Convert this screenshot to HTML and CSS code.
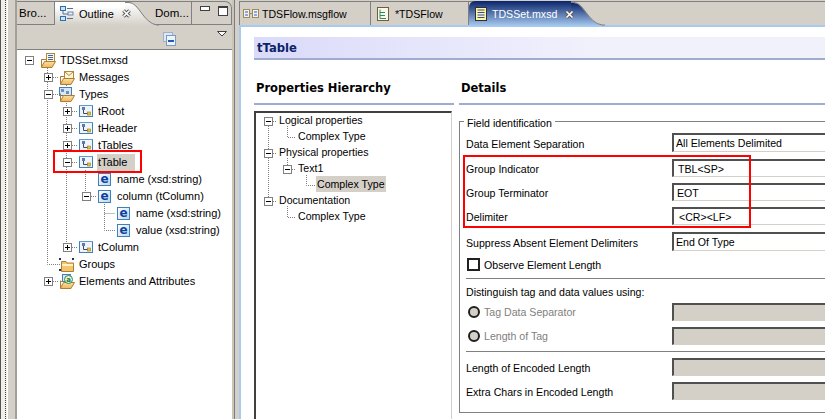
FILE: index.html
```html
<!DOCTYPE html>
<html lang="en">
<head>
<meta charset="utf-8">
<title>TDSSet.mxsd</title>
<link rel="stylesheet" href="styles.css">
</head>
<body>
<svg class="defs" width="0" height="0" aria-hidden="true">
  <defs>
    <linearGradient id="gFolder" x1="0" y1="0" x2="0" y2="1"><stop offset="0" stop-color="#fdeeb8"/><stop offset="1" stop-color="#eeb75e"/></linearGradient>
    <linearGradient id="gBox" x1="0" y1="0" x2="1" y2="1"><stop offset="0" stop-color="#ffffff"/><stop offset="1" stop-color="#bcd6ec"/></linearGradient>
    <g id="folderOpen">
      <path d="M1.5 6.5V14.5H12L15.5 8.5H4.5L1.5 14" fill="url(#gFolder)" stroke="#b07c34"/>
    </g>
    <symbol id="iRoot" viewBox="0 0 16 16">
      <path d="M1.5 14V6.5H6" fill="none" stroke="#b07c34"/>
      <rect x="6.5" y="0.5" width="8" height="9" fill="#fff8d8" stroke="#b08a3c"/>
      <path d="M8 2.5h5M8 4.5h5M8 6.5h5" stroke="#3a66b8"/>
      <use href="#folderOpen"/>
    </symbol>
    <symbol id="iMessages" viewBox="0 0 16 16">
      <path d="M1.5 14V6.5H5" fill="none" stroke="#b07c34"/>
      <rect x="5.5" y="1.5" width="9" height="7" fill="#fff6d8" stroke="#b08a3c"/>
      <path d="M5.5 1.5L10 5.5L14.5 1.5" fill="none" stroke="#b08a3c"/>
      <use href="#folderOpen"/>
    </symbol>
    <symbol id="iTypes" viewBox="0 0 16 16">
      <rect x="0.5" y="0.5" width="12" height="8" fill="#d7e7f6" stroke="#3f80b8"/>
      <rect x="2" y="2" width="3" height="3" fill="#6f8fc0"/>
      <rect x="7" y="4" width="3" height="3" fill="#6f8fc0"/>
      <use href="#folderOpen"/>
    </symbol>
    <symbol id="iType" viewBox="0 0 16 16">
      <rect x="1.5" y="1.5" width="13" height="11" fill="#eef4fb" stroke="#3f80b8"/>
      <rect x="1" y="1" width="14" height="1" fill="#5f9ccc"/>
      <path d="M5.5 5V9.5H10" fill="none" stroke="#404a70"/>
      <rect x="4" y="3" width="3" height="3" fill="#6478a8"/>
      <rect x="9.5" y="8" width="3" height="3" fill="#e8c040" stroke="#9a7a20" stroke-width="0.6"/>
    </symbol>
    <symbol id="iElem" viewBox="0 0 16 16">
      <rect x="1.5" y="1.5" width="12" height="12" fill="url(#gBox)" stroke="#3f80b8"/>
      <text x="7.5" y="11" class="icon-e" text-anchor="middle">e</text>
    </symbol>
    <symbol id="iGroups" viewBox="0 0 16 16">
      <path d="M2.5 14.5V4.5H7L8 6H14.5V14.5Z" fill="#f2c66e" stroke="#b07c34"/>
      <path d="M3 8H14" stroke="#fff0c0" stroke-width="2"/>
      <path d="M0 1h2v2H0zM13 1h2v2h-2zM0 12h2v2H0z" fill="#1c2f6a"/>
    </symbol>
    <symbol id="iElems" viewBox="0 0 16 16">
      <rect x="3.5" y="0.5" width="8" height="7" fill="#d7e7f6" stroke="#3f80b8"/>
      <path d="M1.5 14V7.5H4" fill="none" stroke="#b07c34"/>
      <use href="#folderOpen"/>
      <circle cx="9.5" cy="5.5" r="4" fill="#e6f4e6" stroke="#2f8a4a"/>
      <text x="9.5" y="8" class="icon-a" text-anchor="middle">a</text>
    </symbol>
    <symbol id="iPlus" viewBox="0 0 9 9">
      <rect x="0.5" y="0.5" width="8" height="8" fill="#fff" stroke="#808080"/>
      <path d="M2 4.5h5M4.5 2v5" stroke="#000"/>
    </symbol>
    <symbol id="iMinus" viewBox="0 0 9 9">
      <rect x="0.5" y="0.5" width="8" height="8" fill="#fff" stroke="#808080"/>
      <path d="M2 4.5h5" stroke="#000"/>
    </symbol>
    <symbol id="iClose" viewBox="0 0 11 11">
      <path d="M2.5 2.5L8.5 8.5M8.5 2.5L2.5 8.5" stroke="#5a5a5a" stroke-width="3.6"/>
      <path d="M2.5 2.5L8.5 8.5M8.5 2.5L2.5 8.5" stroke="#fff" stroke-width="1.6"/>
    </symbol>
  </defs>
</svg>

<div class="app">
  <div class="gutter"><span class="gutter-dots"></span></div>

  <aside class="outline">
    <div class="view-tabs">
      <div class="view-tab view-tab-first">Bro...</div>
      <div class="view-tab-active">
        <svg class="tab-icon" width="14" height="15" viewBox="0 0 14 15">
          <rect x="0.5" y="0.5" width="5" height="4" fill="#cfe0f2" stroke="#2a70b0"/>
          <rect x="0.5" y="10.5" width="5" height="4" fill="#cfe0f2" stroke="#2a70b0"/>
          <rect x="8" y="6" width="5" height="3" fill="#e8eef6" stroke="#50709a" stroke-width="0.8"/>
          <path d="M3 5V8H8M7 12.5H13M7 2.5H13" stroke="#50709a" fill="none"/>
        </svg>
        <span class="tab-label">Outline</span>
        <svg class="tab-close" width="11" height="11"><use href="#iClose"/></svg>
        <svg class="tab-curve" width="34" height="25" viewBox="0 0 34 25" preserveAspectRatio="none">
          <defs><linearGradient id="gActive" x1="0" y1="0" x2="0" y2="1"><stop offset="0" stop-color="#ffffff"/><stop offset="1" stop-color="#d4d0c8"/></linearGradient></defs>
          <path d="M0 2H4C14 2 18 22 32 24H34V25H0Z" fill="url(#gActive)"/>
          <path d="M0 1.5H4C14 1.5 18 22 32 24H34" fill="none" stroke="#808080"/>
        </svg>
      </div>
      <div class="view-tab view-tab-dom">Dom...</div>
      <div class="view-controls">
        <span class="ctl-min"></span>
        <span class="ctl-max"></span>
      </div>
    </div>
    <div class="view-toolbar">
      <svg class="collapse-icon" width="13" height="14" viewBox="0 0 13 14">
        <rect x="0.5" y="0.5" width="9" height="9" fill="#dfe6f4" stroke="#9fb0cc"/>
        <rect x="3.5" y="3.5" width="9" height="10" fill="#eef3fb" stroke="#7f9ac0"/>
        <path d="M5 9h6" stroke="#1d5fb0" stroke-width="2"/>
      </svg>
      <svg class="menu-icon" width="11" height="6" viewBox="0 0 11 6"><path d="M0.5 0.5H9.5L5 5Z" fill="#fff" stroke="#404040"/></svg>
    </div>
    <div class="tree outline-tree">
      <svg class="tree-lines" width="215" height="369" viewBox="0 0 215 369">
        <g fill="none" stroke="#808080" stroke-dasharray="1 1">
          <path d="M30.5 18V214.5H43"/>
          <path d="M49.5 35V197"/>
          <path d="M68.5 120V146.5H79"/>
          <path d="M87.5 154V180.5H98M87.5 163.5H98"/>
          <path d="M36 27.5H41M36 44.5H41M55 61.5H60M55 78.5H60M55 95.5H60M55 112.5H60M74 146.5H79M55 197.5H60M36 231.5H41"/>
        </g>
      </svg>
      <div class="row l0"><svg class="exp"><use href="#iMinus"/></svg><svg class="ico"><use href="#iRoot"/></svg><span class="lbl">TDSSet.mxsd</span></div>
      <div class="row l1"><svg class="exp"><use href="#iPlus"/></svg><svg class="ico"><use href="#iMessages"/></svg><span class="lbl">Messages</span></div>
      <div class="row l1"><svg class="exp"><use href="#iMinus"/></svg><svg class="ico"><use href="#iTypes"/></svg><span class="lbl">Types</span></div>
      <div class="row l2"><svg class="exp"><use href="#iPlus"/></svg><svg class="ico"><use href="#iType"/></svg><span class="lbl">tRoot</span></div>
      <div class="row l2"><svg class="exp"><use href="#iPlus"/></svg><svg class="ico"><use href="#iType"/></svg><span class="lbl">tHeader</span></div>
      <div class="row l2"><svg class="exp"><use href="#iPlus"/></svg><svg class="ico"><use href="#iType"/></svg><span class="lbl">tTables</span></div>
      <div class="row l2"><svg class="exp"><use href="#iMinus"/></svg><svg class="ico"><use href="#iType"/></svg><span class="lbl sel">tTable</span></div>
      <div class="row l3"><span class="exp"></span><svg class="ico"><use href="#iElem"/></svg><span class="lbl">name (xsd:string)</span></div>
      <div class="row l3"><svg class="exp"><use href="#iMinus"/></svg><svg class="ico"><use href="#iElem"/></svg><span class="lbl">column (tColumn)</span></div>
      <div class="row l4"><span class="exp"></span><svg class="ico"><use href="#iElem"/></svg><span class="lbl">name (xsd:string)</span></div>
      <div class="row l4"><span class="exp"></span><svg class="ico"><use href="#iElem"/></svg><span class="lbl">value (xsd:string)</span></div>
      <div class="row l2"><svg class="exp"><use href="#iPlus"/></svg><svg class="ico"><use href="#iType"/></svg><span class="lbl">tColumn</span></div>
      <div class="row l1"><span class="exp"></span><svg class="ico"><use href="#iGroups"/></svg><span class="lbl">Groups</span></div>
      <div class="row l1"><svg class="exp"><use href="#iPlus"/></svg><svg class="ico"><use href="#iElems"/></svg><span class="lbl">Elements and Attributes</span></div>
      <span class="callout callout-table"></span>
    </div>
  </aside>

  <div class="sash"></div>

  <main class="editor">
    <div class="editor-tabs">
      <div class="ed-tab ed-tab-flow">
        <svg width="16" height="10" viewBox="0 0 16 10"><rect x="0.5" y="0.5" width="6" height="8" fill="#eef2fa" stroke="#a08a50"/><rect x="9.5" y="0.5" width="6" height="8" fill="#eef2fa" stroke="#a08a50"/><path d="M2 3h3M2 6h3M11 3h3M11 6h3" stroke="#3a5aa8"/><path d="M7 4.5h2" stroke="#a08a50"/></svg>
        <span>TDSFlow.msgflow</span>
      </div>
      <div class="ed-tab ed-tab-map">
        <svg width="12" height="14" viewBox="0 0 12 14"><rect x="0.5" y="0.5" width="11" height="13" fill="#f6f8ee" stroke="#7a5a30"/><path d="M3 2.5V11.5H9M3 5.5H8M3 8.5H8" stroke="#2f8a5a" fill="none"/></svg>
        <span>*TDSFlow</span>
      </div>
      <div class="ed-tab-active">
        <svg class="ed-icon" width="12" height="14" viewBox="0 0 12 14"><rect x="0.5" y="0.5" width="11" height="13" fill="#fff4a0" stroke="#303030"/><path d="M2.5 3h7M2.5 5.5h7M2.5 8h7M2.5 10.5h7" stroke="#2a4ab0"/></svg>
        <span class="ed-label">TDSSet.mxsd</span>
        <svg class="tab-close" width="11" height="11"><use href="#iClose"/></svg>
        <svg class="ed-curve" width="34" height="25" viewBox="0 0 34 25" preserveAspectRatio="none">
          <defs><linearGradient id="gEd" x1="0" y1="0" x2="0" y2="1"><stop offset="0" stop-color="#0a246a"/><stop offset="1" stop-color="#a6caf0"/></linearGradient></defs>
          <path d="M0 2H3C13 2 17 22 31 24H34V25H0Z" fill="url(#gEd)"/>
          <path d="M0 1.5H3C13 1.5 17 22 31 24H34" fill="none" stroke="#808080"/>
        </svg>
      </div>
    </div>
    <div class="editor-body">
      <h1 class="form-title">tTable</h1>
      <div class="columns">
        <section class="col-hier">
          <h2 class="col-head">Properties Hierarchy</h2>
          <div class="tree hier-tree">
            <svg class="tree-lines" width="196" height="120" viewBox="0 0 196 120">
              <g fill="none" stroke="#808080" stroke-dasharray="1 1">
                <path d="M12.5 13V84M17 8.5H21M17 40.5H21M17 88.5H21"/>
                <path d="M31.5 13V24.5H39M31.5 93V104.5H39"/>
                <path d="M31.5 45V52M36 56.5H40"/>
                <path d="M50.5 62V72.5H60"/>
              </g>
            </svg>
            <div class="hrow h0"><svg class="exp"><use href="#iMinus"/></svg><span>Logical properties</span></div>
            <div class="hrow h1"><span>Complex Type</span></div>
            <div class="hrow h0"><svg class="exp"><use href="#iMinus"/></svg><span>Physical properties</span></div>
            <div class="hrow h1b"><svg class="exp"><use href="#iMinus"/></svg><span>Text1</span></div>
            <div class="hrow h2"><span class="sel">Complex Type</span></div>
            <div class="hrow h0"><svg class="exp"><use href="#iMinus"/></svg><span>Documentation</span></div>
            <div class="hrow h1"><span>Complex Type</span></div>
          </div>
        </section>
        <section class="col-details">
          <h2 class="col-head">Details</h2>
          <div class="group">
            <span class="group-legend">Field identification</span>
            <div class="field field-first"><label>Data Element Separation</label><div class="input input-tall v0">All Elements Delimited</div></div>
            <div class="field field-gap"><label>Group Indicator</label><div class="input v2">TBL&lt;SP&gt;</div></div>
            <div class="field"><label>Group Terminator</label><div class="input v1">EOT</div></div>
            <div class="field"><label>Delimiter</label><div class="input v3">&lt;CR&gt;&lt;LF&gt;</div></div>
            <div class="field field-gap"><label>Suppress Absent Element Delimiters</label><div class="input input-tall v0">End Of Type</div></div>
            <div class="check-row"><span class="checkbox"></span><span>Observe Element Length</span></div>
            <hr class="sep sep-a">
            <div class="plain-label">Distinguish tag and data values using:</div>
            <div class="field field-radio"><label class="disabled"><span class="radio"></span>Tag Data Separator</label><div class="input input-off"></div></div>
            <div class="field"><label class="disabled"><span class="radio"></span>Length of Tag</label><div class="input input-off"></div></div>
            <hr class="sep sep-b">
            <div class="field"><label>Length of Encoded Length</label><div class="input input-off"></div></div>
            <div class="field"><label>Extra Chars in Encoded Length</label><div class="input input-off"></div></div>
            <span class="callout callout-fields"></span>
          </div>
        </section>
      </div>
    </div>
  </main>
</div>
</body>
</html>
```

FILE: styles.css
```css
* { box-sizing: border-box; }
html, body { margin: 0; padding: 0; }
body {
  width: 825px;
  height: 419px;
  overflow: hidden;
  background: #d4d0c8;
  color: #000;
  font: 11px/14px "Liberation Sans", Arial, sans-serif;
}
.defs { position: absolute; }
.icon-e { font: bold 12px "DejaVu Sans", sans-serif; fill: #0b3f9e; }
.icon-a { font: bold 7px "DejaVu Sans", sans-serif; fill: #1f7a3a; }

.app { display: flex; width: 825px; height: 419px; overflow: hidden; }

.gutter {
  width: 15px;
  flex: none;
  display: flex;
  background: #d4d0c8;
  border-left: 1px solid #555;
}
.gutter-dots {
  width: 7px;
  background: #f2efe9;
  border-right: 1px solid #fff;
  position: relative;
}
.gutter-dots::after {
  content: "";
  position: absolute;
  left: 4px;
  top: 0;
  bottom: 0;
  border-left: 1px dotted #404040;
}

/* Outline view */
.outline {
  width: 217px;
  flex: none;
  display: flex;
  flex-direction: column;
  background: #d4d0c8;
  border-left: 2px solid #a0a09a;
}
.view-tabs {
  height: 24px;
  margin-top: 1px;
  flex: none;
  display: flex;
  position: relative;
  border-top: 1px solid #808080;
  border-right: 1px solid #808080;
  border-top-right-radius: 7px;
  border-bottom: 1px solid #808080;
  font-size: 11px;
}
.view-tab { display: flex; align-items: center; height: 22px; }
.view-tab-first { width: 38px; padding-left: 2px; border-right: 1px solid #808080; font-size: 11.5px; }
.view-tab-active {
  width: 70px;
  height: 24px;
  margin-top: -1px;
  flex: none;
  display: flex;
  align-items: center;
  position: relative;
  padding-left: 5px;
  background: linear-gradient(#ffffff 20%, #d4d0c8);
  border-top: 1px solid #808080;
  z-index: 1;
}
.tab-icon { flex: none; }
.tab-label { margin-left: 5px; width: 42px; flex: none; }
.tab-close { flex: none; position: relative; z-index: 1; }
.tab-curve { position: absolute; left: 70px; top: -1px; }
.view-tab-dom { box-sizing: content-box; padding-left: 30px; width: 36px; border-right: 1px solid #808080; font-size: 11.5px; }
.view-controls { display: flex; gap: 8px; padding: 4px 0 0 8px; }
.ctl-min { width: 10px; height: 5px; background: #fff; border: 1px solid #404040; }
.ctl-max { width: 10px; height: 10px; background: #fff; border: 1px solid #404040; border-top-width: 2px; }

.view-toolbar {
  height: 25px;
  flex: none;
  display: flex;
  justify-content: flex-end;
  gap: 41px;
  padding: 7px 4px 0 0;
  border-bottom: 1px solid #808080;
}
.menu-icon { margin-top: -1px; }

.tree { position: relative; background: #fff; }
.tree-lines { position: absolute; left: 0; top: 0; }
.outline-tree { flex: 1; padding-top: 2px; }

.row { display: flex; align-items: center; height: 17px; position: relative; }
.l0 { padding-left: 8px; }
.l1 { padding-left: 27px; }
.l2 { padding-left: 46px; }
.l3 { padding-left: 65px; }
.l4 { padding-left: 84px; }
.exp { width: 9px; height: 9px; flex: none; margin-right: 6px; }
.ico { width: 16px; height: 16px; flex: none; margin-right: 3px; }
.lbl { padding: 0 1px; line-height: 17px; white-space: nowrap; }
.sel { background: #d4d0c8; }
.lbl.sel { padding-right: 8px; }

.callout { position: absolute; border: 2px solid #f00; pointer-events: none; }
.callout-table { left: 36px; top: 100px; width: 89px; height: 23px; }
.callout-fields { left: 3px; top: 33px; width: 288px; height: 73px; }

.sash { width: 7px; flex: none; border-left: 2px solid #c8c6b8; position: relative; }
.sash::before { content: ""; position: absolute; left: 0; top: 0; bottom: 0; border-left: 1px solid #807a80; }

/* Editor */
.editor { flex: 1; min-width: 0; display: flex; flex-direction: column; }
.editor-tabs {
  height: 25px;
  flex: none;
  display: flex;
  background: linear-gradient(#d4d0c8 1px, #808080 1px, #808080 2px, #d4d0c8 2px);
  font-size: 10.6px;
}
.ed-tab { display: flex; align-items: center; gap: 3px; height: 23px; margin-top: 2px; border-right: 1px solid #808080; }
.ed-tab-flow { width: 132px; padding-left: 3px; border-left: 1px solid #808080; }
.ed-tab-map { width: 98px; padding-left: 6px; gap: 6px; }
.ed-tab-active {
  width: 102px;
  height: 25px;
  flex: none;
  display: flex;
  align-items: center;
  position: relative;
  padding: 1px 0 0 6px;
  margin-top: 1px;
  color: #fff;
  background: linear-gradient(#0a246a, #a6caf0);
  border-radius: 6px 0 0 0;
}
.ed-icon { flex: none; }
.ed-label { margin-left: 5px; width: 72px; flex: none; }
.ed-curve { position: absolute; left: 102px; top: 0; }

.editor-body {
  flex: 1;
  min-height: 0;
  background: #fff;
  border-left: 2px solid #a6caf0;
  border-top: 2px solid #a6caf0;
  padding: 10px 0 0 13px;
  display: flex;
  flex-direction: column;
}
.form-title {
  margin: 0;
  height: 23px;
  padding: 3px 0 0 3px;
  font: bold 11.6px/17px "DejaVu Sans", sans-serif;
  color: #0a246a;
  background: linear-gradient(90deg, #dadafa, #f1f1fc 60%);
  border-bottom: 2px solid #9eaccd;
}
.columns { flex: 1; min-height: 0; display: flex; gap: 5px; }
.col-head {
  margin: 0;
  height: 45px;
  padding: 20px 0 0 2px;
  font: bold 11.5px/16px "DejaVu Sans", sans-serif;
  border-bottom: 2px solid #9eaccd;
}
.col-hier { width: 200px; flex: none; display: flex; flex-direction: column; }
.hier-tree {
  flex: 1;
  margin: 6px 2px 0 0;
  border: 2px solid #404040;
  border-right: 1px solid #d4d0c8;
  border-bottom: none;
  font-size: 10.6px;
}
.hrow { display: flex; align-items: center; height: 16px; position: relative; white-space: nowrap; }
.hrow span { margin-top: -2px; }
.h0 { padding-left: 8px; }
.h1 { padding-left: 42px; }
.h1b { padding-left: 27px; }
.h2 { padding-left: 60px; }
.h2 .sel { padding: 0 1px; line-height: 16px; }

.col-details { flex: 1; min-width: 0; }
.group {
  position: relative;
  margin: 16px -12px 0 0;
  height: 292px;
  padding: 11px 0 0 6px;
  border: 1px solid #808080;
}
.group-legend { position: absolute; left: 4px; top: -6px; padding: 0 3px; background: #fff; font-size: 10.6px; }
.field { display: flex; align-items: center; margin-top: 6px; font-size: 10.6px; }
.field-first { margin-top: 0; }
.field-gap { margin-top: 7px; }
.field label { width: 206px; flex: none; display: flex; align-items: center; padding-top: 2px; white-space: nowrap; }
.field label.disabled { padding-top: 0; color: #808080; }
.input {
  flex: 1;
  height: 18px;
  line-height: 16px;
  background: #fff;
  border-top: 2px solid #505050;
  border-left: 2px solid #505050;
  border-bottom: 1px solid #d4d0c8;
  white-space: nowrap;
}
.input-tall { height: 19px; line-height: 17px; }
.v0 { padding-left: 2px; }
.v1 { padding-left: 3px; }
.v2 { padding-left: 4px; }
.v3 { padding-left: 5px; }
.input-off { background: #d4d0c8; }
.check-row { display: flex; align-items: center; gap: 4px; margin-top: 7px; padding-left: 1px; height: 13px; font-size: 10.6px; }
.checkbox { width: 13px; height: 13px; flex: none; background: #fff; border: 2px solid #202020; }
.sep { margin: 0; border: none; height: 1px; background: #808080; }
.sep-a { margin-top: 7px; }
.sep-b { margin-top: 6px; }
.plain-label { margin-top: 6px; font-size: 10.6px; line-height: 14px; }
.field-radio { margin-top: 4px; }
.radio { width: 12px; height: 12px; flex: none; margin: 0 4px 0 2px; border-radius: 50%; background: #d4d0c8; border: 2px solid #202020; }
```
